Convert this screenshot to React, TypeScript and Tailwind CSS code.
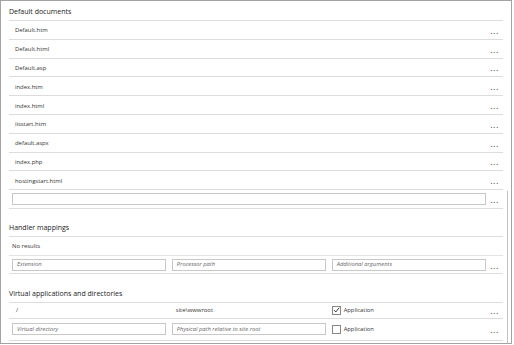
import React from "react";

const docs = [
  "Default.htm",
  "Default.html",
  "Default.asp",
  "index.htm",
  "index.html",
  "iisstart.htm",
  "default.aspx",
  "index.php",
  "hostingstart.html",
];

function More() {
  return (
    <div className="w-[17px] shrink-0 flex justify-center text-[#444] text-[9px] leading-none tracking-[0.5px] mt-[1px]">
      ...
    </div>
  );
}

function Field({ placeholder }: { placeholder?: string }) {
  return (
    <div className="h-[12px] border border-[#c8c8c8] bg-white flex items-center px-[4px] text-[5.8px] italic text-[#666] min-w-0 whitespace-nowrap overflow-hidden">
      {placeholder}
    </div>
  );
}

function Check({ checked }: { checked?: boolean }) {
  return (
    <div className="flex items-center gap-[3px]">
      <div className="w-[9px] h-[9px] border border-[#888] bg-white flex items-center justify-center">
        {checked && (
          <svg viewBox="0 0 10 10" className="w-[8px] h-[8px]">
            <path d="M1.5 5.2 L4 7.8 L8.8 1.8" fill="none" stroke="#222" strokeWidth="1.3" />
          </svg>
        )}
      </div>
      <span className="text-[5.8px] text-[#333]">Application</span>
    </div>
  );
}

function Heading({ children, h }: { children: React.ReactNode; h: string }) {
  return (
    <div className={`${h} flex items-end pb-[3px] text-[7px] text-[#222] border-b-[1.5px] border-[#dedede]`}>
      {children}
    </div>
  );
}

export default function App() {
  return (
    <div
      className="w-[514px] h-[345px] bg-white overflow-hidden"
      style={{ fontFamily: '"Open Sans", "Noto Sans", sans-serif' }}
    >
      <div className="w-[512px] h-[344px] border border-[#a3a3a3] flex">
        <div className="flex-1 pl-[8px] pr-[4px] min-w-0">
          <Heading h="h-[20px]">Default documents</Heading>
          {docs.map((d) => (
            <div
              key={d}
              className="h-[18.8px] flex items-center border-b border-[#dcdcdc]"
            >
              <div className="flex-1 pl-[6px] pt-[2px] text-[5.9px] text-[#333]">{d}</div>
              <More />
            </div>
          ))}
          <div className="h-[19px] flex items-center border-b-[1.5px] border-[#dedede] pl-[3px]">
            <div className="flex-1">
              <Field />
            </div>
            <More />
          </div>

          <Heading h="h-[28px]">Handler mappings</Heading>
          <div className="h-[19px] flex items-center pl-[3px] text-[5.9px] text-[#333] border-b border-[#e4e4e4]">
            No results
          </div>
          <div className="h-[18px] flex items-center border-b-[1.5px] border-[#dedede] pl-[3px]">
            <div className="flex-1 grid grid-cols-3 gap-[5.5px]">
              <Field placeholder="Extension" />
              <Field placeholder="Processor path" />
              <Field placeholder="Additional arguments" />
            </div>
            <More />
          </div>

          <Heading h="h-[29px]">Virtual applications and directories</Heading>
          <div className="h-[15.5px] flex items-center border-b border-[#dcdcdc] pl-[3px]">
            <div className="flex-1 grid grid-cols-3 gap-[5.5px] text-[5.9px] text-[#333] items-center">
              <div className="pl-[4px]">/</div>
              <div className="pl-[4px]">site\wwwroot</div>
              <Check checked />
            </div>
            <More />
          </div>
          <div className="h-[22px] flex items-center border-b border-[#dcdcdc] pl-[3px]">
            <div className="flex-1 grid grid-cols-3 gap-[5.5px] items-center">
              <Field placeholder="Virtual directory" />
              <Field placeholder="Physical path relative to site root" />
              <Check />
            </div>
            <More />
          </div>
        </div>
        <div className="w-[4px] flex flex-col">
          <div className="h-[190px]" />
          <div className="flex-1 border-l border-[#c4c4c4]" />
        </div>
      </div>
    </div>
  );
}
